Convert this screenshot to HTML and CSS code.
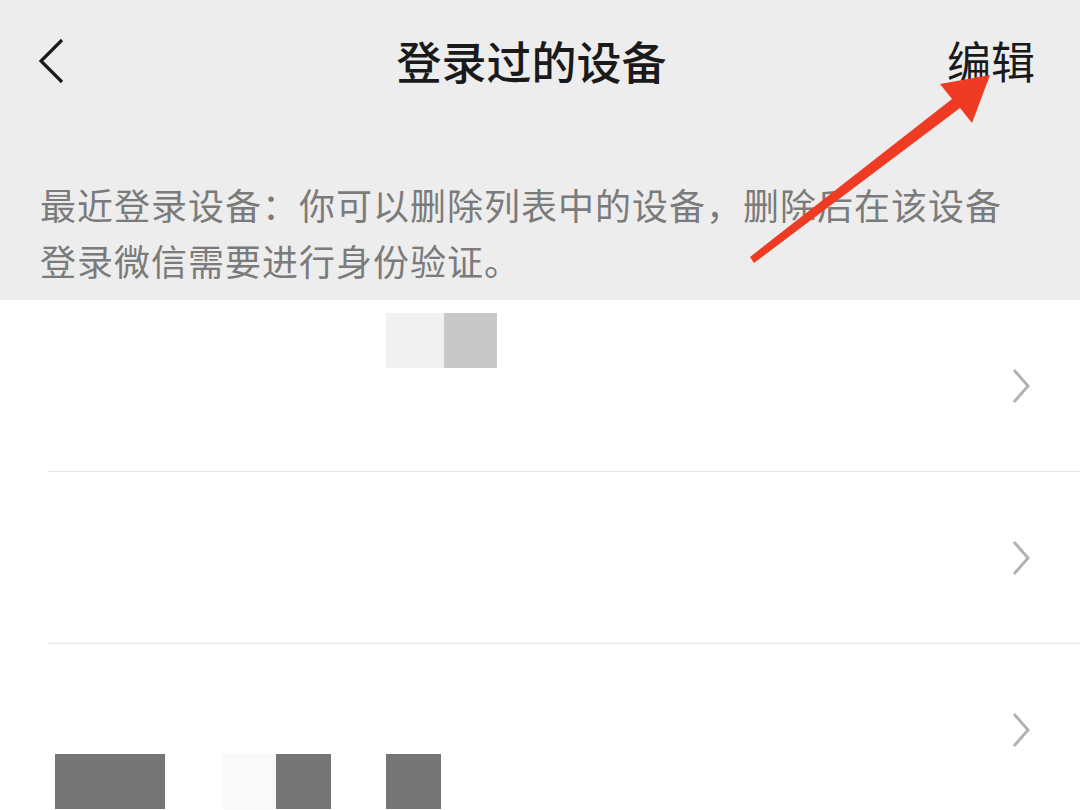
FILE: index.html
```html
<!DOCTYPE html>
<html lang="zh-CN">
<head>
  <meta charset="UTF-8" />
  <meta name="viewport" content="width=device-width, initial-scale=1.0" />
  <title>登录过的设备</title>
  <link rel="stylesheet" href="styles.css">
</head>
<body>

  <div class="page">
    <!-- Top bar -->
    <div class="header">
      <div class="navbar">
        <div class="back">
          <svg width="30" height="48" viewBox="0 0 30 48">
            <polyline points="24,4 3,25 24,46" fill="none" stroke="#1a1a1a" stroke-width="3.2" stroke-linejoin="miter" />
          </svg>
        </div>
        <div class="title">登录过的设备</div>
        <div class="edit">编辑</div>
      </div>
      <p class="desc">最近登录设备：你可以删除列表中的设备，删除后在该设备登录微信需要进行身份验证。</p>
    </div>

    <!-- Device list -->
    <div class="device-list">
      <div class="device-row">
        <div class="info info-top">
          <div class="mask-group first">
            <span class="mask light" style="width: 58px"></span>
            <span class="mask mid" style="width: 53px"></span>
          </div>
        </div>
        <svg class="chevron" width="20" height="36" viewBox="0 0 20 36">
          <polyline points="3,2 17,18 3,34" fill="none" stroke="#b2b2b2" stroke-width="3" />
        </svg>
      </div>

      <div class="device-row">
        <div class="info"></div>
        <svg class="chevron" width="20" height="36" viewBox="0 0 20 36">
          <polyline points="3,2 17,18 3,34" fill="none" stroke="#b2b2b2" stroke-width="3" />
        </svg>
      </div>

      <div class="device-row last">
        <div class="info info-bottom">
          <div class="mask-group third">
            <span class="mask dark" style="width: 110px"></span>
            <span class="mask faint" style="width: 54px; margin-left: 57px"></span>
            <span class="mask dark" style="width: 55px"></span>
            <span class="mask dark" style="width: 55px; margin-left: 55px"></span>
          </div>
        </div>
        <svg class="chevron" width="20" height="36" viewBox="0 0 20 36">
          <polyline points="3,2 17,18 3,34" fill="none" stroke="#b2b2b2" stroke-width="3" />
        </svg>
      </div>
    </div>

    <!-- Annotation arrow -->
    <svg class="arrow" width="1080" height="810" viewBox="0 0 1080 810">
      <polygon points="990,75 940,84 952,99 750,257 754,263 960,108 972,123" fill="#ef3b24" />
    </svg>
  </div>

</body>
</html>
```

FILE: styles.css
```css
body {
  margin: 0;
  padding: 0;
  font-family: "Noto Sans CJK SC", "Noto Sans", sans-serif;
  background-color: #fff;
  overflow: hidden;
}

.page {
  position: relative;
  width: 1080px;
  height: 810px;
  overflow: hidden;
}

/* Header */
.header {
  background-color: #ededed;
  padding-bottom: 12px;
}

.navbar {
  height: 120px;
  display: grid;
  grid-template-columns: 1fr auto 1fr;
  align-items: center;
  padding: 0 45px 0 38px;
}

.back {
  display: flex;
  align-items: center;
}

.title {
  font-size: 45px;
  font-weight: 500;
  color: #1a1a1a;
  margin-right: 10px;
}

.edit {
  justify-self: end;
  font-size: 44px;
  color: #1a1a1a;
}

.desc {
  margin: 0;
  padding: 56px 60px 0 40px;
  font-size: 36px;
  line-height: 56px;
  letter-spacing: 1px;
  color: #7b7b7b;
}

/* List */
.device-row {
  position: relative;
  height: 172px;
  display: flex;
  align-items: center;
  background-color: #fff;
}

.device-row::after {
  content: "";
  position: absolute;
  left: 48px;
  right: 0;
  bottom: 0;
  height: 1px;
  background-color: #e6e6e6;
}

.device-row.last::after {
  display: none;
}

.info {
  flex-grow: 1;
  align-self: stretch;
  display: flex;
  flex-direction: column;
}

.mask-group {
  display: flex;
  height: 55px;
}

.mask-group.first {
  margin: 13px 0 0 386px;
}

.mask-group.third {
  margin: 110px 0 0 55px;
}

.mask.light { background-color: #f1f1f1; }
.mask.mid { background-color: #c8c8c8; }
.mask.dark { background-color: #757575; }
.mask.faint { background-color: #f9f9f9; }

.chevron {
  margin-right: 49px;
}

/* Arrow overlay */
.arrow {
  position: absolute;
  top: 0;
  left: 0;
  pointer-events: none;
}
```
